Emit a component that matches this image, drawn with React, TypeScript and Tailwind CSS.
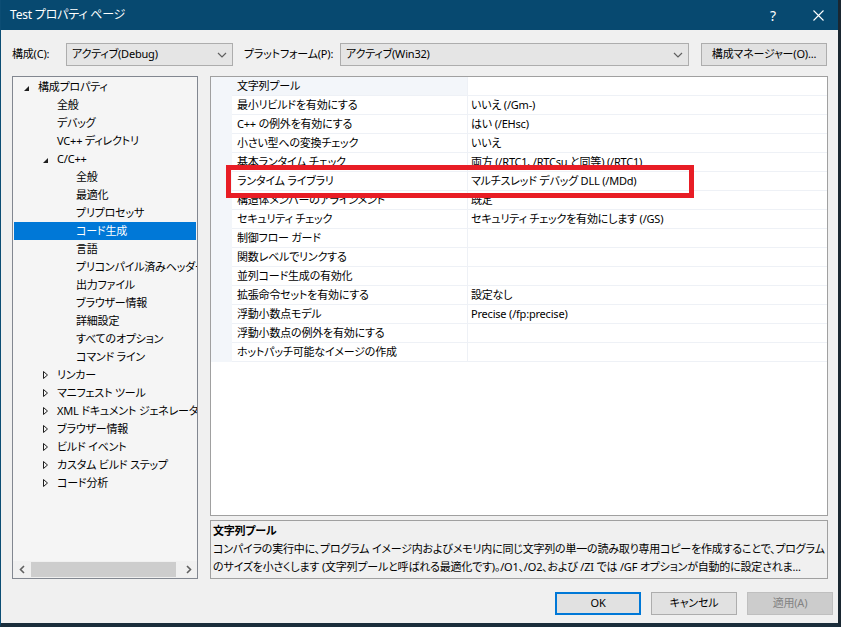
import React from 'react';

type TreeItem = { label: string; level: number; expander?: 'open' | 'closed'; selected?: boolean };

const tree: TreeItem[] = [
  { label: '構成プロパティ', level: 0, expander: 'open' },
  { label: '全般', level: 1 },
  { label: 'デバッグ', level: 1 },
  { label: 'VC++ ディレクトリ', level: 1 },
  { label: 'C/C++', level: 1, expander: 'open' },
  { label: '全般', level: 2 },
  { label: '最適化', level: 2 },
  { label: 'プリプロセッサ', level: 2 },
  { label: 'コード生成', level: 2, selected: true },
  { label: '言語', level: 2 },
  { label: 'プリコンパイル済みヘッダー', level: 2 },
  { label: '出力ファイル', level: 2 },
  { label: 'ブラウザー情報', level: 2 },
  { label: '詳細設定', level: 2 },
  { label: 'すべてのオプション', level: 2 },
  { label: 'コマンド ライン', level: 2 },
  { label: 'リンカー', level: 1, expander: 'closed' },
  { label: 'マニフェスト ツール', level: 1, expander: 'closed' },
  { label: 'XML ドキュメント ジェネレーター', level: 1, expander: 'closed' },
  { label: 'ブラウザー情報', level: 1, expander: 'closed' },
  { label: 'ビルド イベント', level: 1, expander: 'closed' },
  { label: 'カスタム ビルド ステップ', level: 1, expander: 'closed' },
  { label: 'コード分析', level: 1, expander: 'closed' },
];

const indent = ['pl-[9px]', 'pl-[28px]', 'pl-[47px]'];

const props: [string, string][] = [
  ['文字列プール', ''],
  ['最小リビルドを有効にする', 'いいえ (/Gm-)'],
  ['C++ の例外を有効にする', 'はい (/EHsc)'],
  ['小さい型への変換チェック', 'いいえ'],
  ['基本ランタイム チェック', '両方 (/RTC1、/RTCsu と同等) (/RTC1)'],
  ['ランタイム ライブラリ', 'マルチスレッド デバッグ DLL (/MDd)'],
  ['構造体メンバーのアラインメント', '既定'],
  ['セキュリティ チェック', 'セキュリティ チェックを有効にします (/GS)'],
  ['制御フロー ガード', ''],
  ['関数レベルでリンクする', ''],
  ['並列コード生成の有効化', ''],
  ['拡張命令セットを有効にする', '設定なし'],
  ['浮動小数点モデル', 'Precise (/fp:precise)'],
  ['浮動小数点の例外を有効にする', ''],
  ['ホットパッチ可能なイメージの作成', ''],
];

const Chevron = () => (
  <svg width="10" height="6" viewBox="0 0 10 6" className="shrink-0">
    <path d="M1 1 L5 5 L9 1" fill="none" stroke="#606060" strokeWidth="1.2" />
  </svg>
);

const Expander = ({ kind }: { kind: 'open' | 'closed' }) =>
  kind === 'open' ? (
    <svg width="15" height="18" viewBox="0 0 15 18">
      <polygon points="6,8 6,13 1,13" fill="#1e1e1e" />
    </svg>
  ) : (
    <svg width="15" height="18" viewBox="0 0 15 18">
      <polygon points="1.5,5.5 5.5,9 1.5,12.5" fill="none" stroke="#1e1e1e" strokeWidth="1" />
    </svg>
  );

export default function App() {
  return (
    <div className="w-[841px] h-[627px] flex flex-col border-l border-l-[#0c4d74] border-r-[3px] border-r-[#1a2731] border-b-[4px] border-b-[#1a2d3b] bg-[#f0f0f0] text-[11px] tracking-[-0.2px] text-black font-['Noto_Sans','Noto_Sans_CJK_JP',sans-serif] [font-feature-settings:'palt'] overflow-hidden">
      {/* title bar */}
      <div className="h-[30px] shrink-0 bg-[#074970] flex items-center pl-[9px] text-white">
        <span className="text-[12px]">Test プロパティ ページ</span>
        <span className="ml-auto text-[14px] mr-[37px]">?</span>
        <svg width="11" height="11" viewBox="0 0 11 11" className="mr-[14px]">
          <path d="M0.5 0.5 L10.5 10.5 M10.5 0.5 L0.5 10.5" stroke="white" strokeWidth="1.1" />
        </svg>
      </div>

      {/* toolbar */}
      <div className="mt-[13px] h-[23px] flex items-center pl-[11px] shrink-0 whitespace-nowrap">
        <span className="w-[54px] shrink-0">構成(C):</span>
        <div className="w-[167px] shrink-0 h-[23px] bg-[#e5e5e5] border border-[#adadad] flex items-center pl-[5px] pr-[5px]">
          <span className="flex-1">アクティブ(Debug)</span>
          <Chevron />
        </div>
        <span className="ml-[11px] w-[96px] shrink-0">プラットフォーム(P):</span>
        <div className="w-[349px] shrink-0 h-[23px] bg-[#e5e5e5] border border-[#adadad] flex items-center pl-[5px] pr-[5px]">
          <span className="flex-1">アクティブ(Win32)</span>
          <Chevron />
        </div>
        <div className="ml-[12px] w-[126px] shrink-0 h-[23px] bg-[#e1e1e1] border border-[#adadad] flex items-center justify-center">
          構成マネージャー(O)...
        </div>
      </div>

      {/* main */}
      <div className="mt-[10px] h-[503px] flex pl-[11px] pr-[10px] gap-[12px] shrink-0">
        {/* tree */}
        <div className="w-[186px] shrink-0 h-full border border-[#828790] bg-[#f5f5f5] flex flex-col">
          <div className="flex-1 pt-[1px] px-[1px] overflow-hidden">
            {tree.map((t, i) => (
              <div
                key={i}
                className={`h-[18px] flex items-center whitespace-nowrap ${indent[t.level]} ${
                  t.selected ? 'bg-[#0078d7] text-white' : ''
                }`}
              >
                <div className="w-[15px] shrink-0 flex">{t.expander && <Expander kind={t.expander} />}</div>
                <span>{t.label}</span>
              </div>
            ))}
          </div>
          <div className="h-[17px] flex items-center bg-[#f0f0f0] shrink-0">
            <div className="w-[17px] h-full flex items-center justify-center">
              <svg width="6" height="9" viewBox="0 0 6 9">
                <path d="M5 1 L1.5 4.5 L5 8" fill="none" stroke="#606060" strokeWidth="1.6" />
              </svg>
            </div>
            <div className="ml-[1px] w-[145px] h-[15px] bg-[#cdcdcd]" />
            <div className="ml-auto w-[17px] h-full flex items-center justify-center">
              <svg width="6" height="9" viewBox="0 0 6 9">
                <path d="M1 1 L4.5 4.5 L1 8" fill="none" stroke="#606060" strokeWidth="1.6" />
              </svg>
            </div>
          </div>
        </div>

        {/* right column */}
        <div className="flex-1 min-w-0 flex flex-col gap-[4px]">
          <div className="relative h-[440px] border border-[#a0a0a0] bg-white overflow-hidden">
            {props.map(([name, value], i) => (
              <div key={i} className="h-[19px] flex">
                <div className="w-[21px] shrink-0 bg-[#f3f6fa]" />
                <div
                  className={`w-[236px] shrink-0 h-full border-b border-r border-[#eef1f6] pl-[5px] flex items-center whitespace-nowrap ${
                    i === 0 ? 'bg-[#f3f6fa]' : ''
                  }`}
                >
                  {name}
                </div>
                <div className="flex-1 h-full border-b border-[#eef1f6] pl-[3px] flex items-center whitespace-nowrap">
                  {value}
                </div>
              </div>
            ))}
            <div className="absolute left-[15px] top-[88px] w-[468px] h-[33px] border-[5px] border-[#e81d25]" />
          </div>
          <div className="h-[59px] border border-[#a0a0a0] bg-[#f0f0f0] pl-[2px] pt-[1px] leading-[18px] overflow-hidden">
            <div className="font-bold">文字列プール</div>
            <div className="whitespace-nowrap">
              コンパイラの実行中に、プログラム イメージ内およびメモリ内に同じ文字列の単一の読み取り専用コピーを作成することで、プログラム
            </div>
            <div className="whitespace-nowrap">
              のサイズを小さくします (文字列プールと呼ばれる最適化です)。/O1、/O2、および /ZI では /GF オプションが自動的に設定されま...
            </div>
          </div>
        </div>
      </div>

      {/* buttons */}
      <div className="mt-[13px] h-[23px] flex justify-end gap-[10px] pr-[5px] shrink-0">
        <div className="w-[86px] h-[23px] border-2 border-[#0078d7] bg-[#e1e1e1] flex items-center justify-center">OK</div>
        <div className="w-[86px] h-[23px] border border-[#adadad] bg-[#e1e1e1] flex items-center justify-center">キャンセル</div>
        <div className="w-[86px] h-[23px] border border-[#bfbfbf] bg-[#cccccc] text-[#838383] flex items-center justify-center">適用(A)</div>
      </div>
    </div>
  );
}
